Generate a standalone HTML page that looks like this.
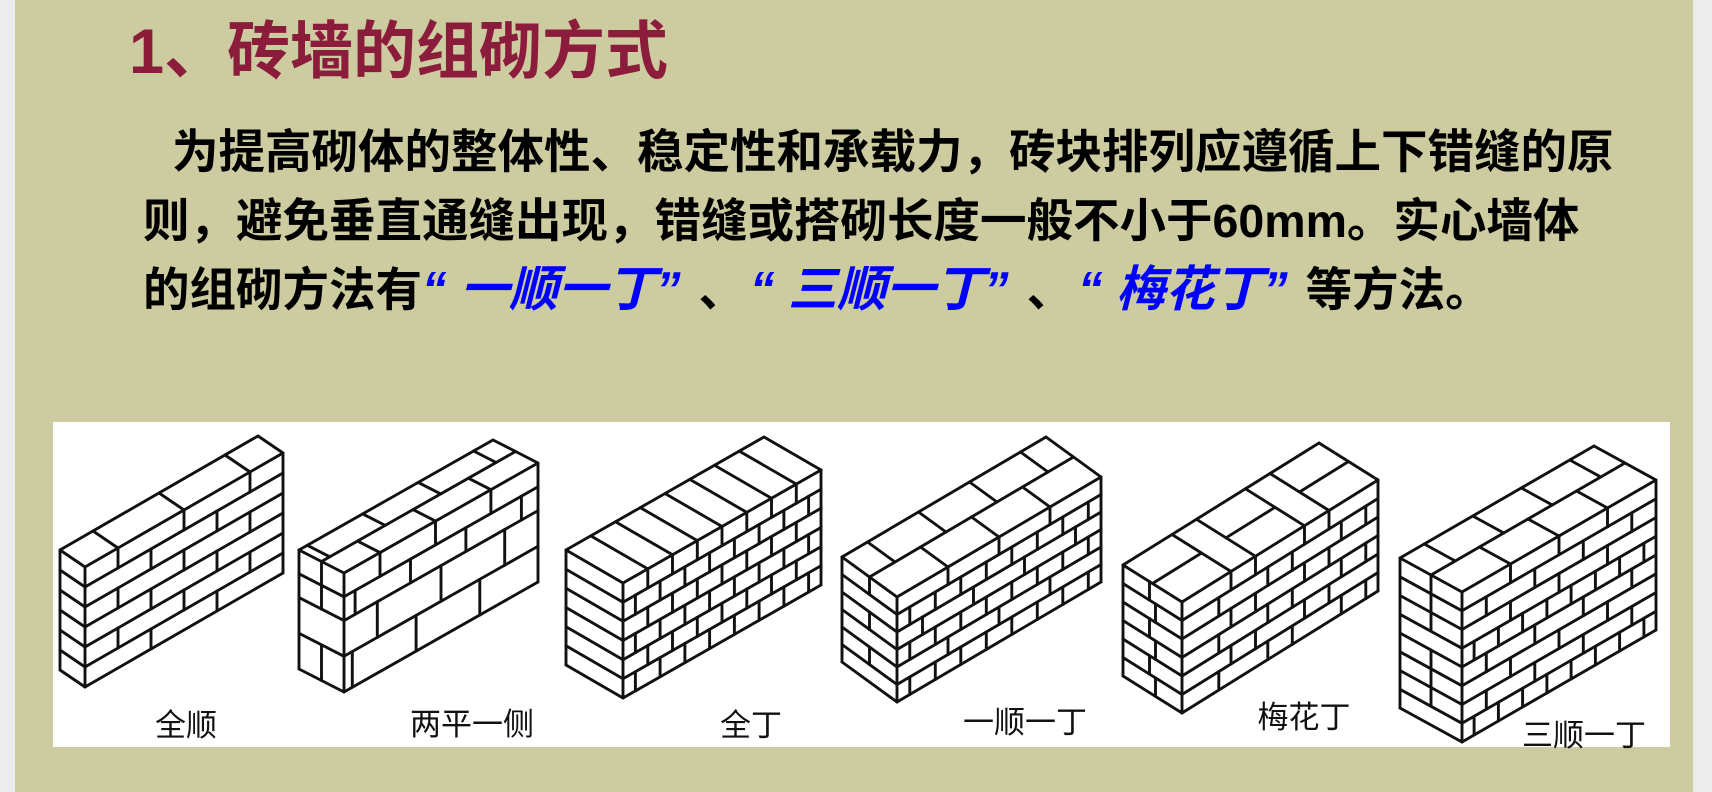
<!DOCTYPE html>
<html><head><meta charset="utf-8">
<style>
html,body{margin:0;padding:0;width:1712px;height:792px;overflow:hidden;background:#ececec;}
#slide{position:absolute;left:15px;top:0;width:1678px;height:792px;background:#cdcca0;}
.t{position:absolute;white-space:nowrap;font-family:"Liberation Sans","Noto Sans CJK SC",sans-serif;}
#title{left:129px;top:18px;font-size:63px;line-height:68px;color:#8c1c3c;font-weight:bold;letter-spacing:0px;}
.body{font-size:46.5px;line-height:69px;font-weight:bold;color:#000;}
.blue{color:#0000ff;font-style:italic;font-size:49px;}
.gap{display:inline-block;width:5px;}
#box{position:absolute;left:53px;top:422px;width:1617px;height:325px;background:#fff;}
.lab{position:absolute;font-family:"Noto Sans CJK SC","WenQuanYi Zen Hei",sans-serif;font-size:31px;line-height:34px;color:#111;white-space:nowrap;transform:translateX(-50%);}
</style></head><body>
<div id="slide"></div>
<div class="t" id="title">1、砖墙的组砌方式</div>
<div class="t body" style="left:172px;top:118px;">为提高砌体的整体性、稳定性和承载力，砖块排列应遵循上下错缝的原</div>
<div class="t body" style="left:143px;top:187px;">则，避免垂直通缝出现，错缝或搭砌长度一般不小于60mm。实心墙体</div>
<div class="t body" style="left:143px;top:256px;">的组砌方法有<span class="blue">“ 一顺一丁”</span><span class="gap"></span> 、<span class="gap"></span><span class="blue">“ 三顺一丁”</span><span class="gap"></span> 、<span class="gap"></span><span class="blue">“ 梅花丁”</span><span class="gap"></span> 等方法。</div>
<div id="box"></div>
<svg id="w" width="1712" height="792" style="position:absolute;left:0;top:0" xmlns="http://www.w3.org/2000/svg"></svg>
<div class="lab" style="left:186px;top:706px;">全顺</div>
<div class="lab" style="left:472px;top:705px;">两平一侧</div>
<div class="lab" style="left:751px;top:706px;">全丁</div>
<div class="lab" style="left:1025px;top:703px;">一顺一丁</div>
<div class="lab" style="left:1304px;top:698px;">梅花丁</div>
<div class="lab" style="left:1584px;top:716px;">三顺一丁</div>
<script>
var out=[];
function ln(p,q){out.push('<line x1="'+p[0].toFixed(1)+'" y1="'+p[1].toFixed(1)+'" x2="'+q[0].toFixed(1)+'" y2="'+q[1].toFixed(1)+'"/>');}
function joints(type,o,U){
  var r=[],p;
  if(type=='S'){for(p=o;p<U-0.05;p+=2)if(p>0.05)r.push(p);}
  else if(type=='H'){for(p=o;p<U-0.05;p+=1)if(p>0.05)r.push(p);}
  else if(type=='R'){for(p=o;p<U-0.05;p+=2.3)if(p>0.05)r.push(p);}
  else if(type=='F'){p=o;var k=0;while(p<U-0.05){if(p>0.05)r.push(p);p+=(k%2==0)?2:1;k++;}}
  return r;
}
function wall(A,B,C,h,U,courses,thin){
  var fx=(C[0]-B[0])/U,fy=(C[1]-B[1])/U,dx=A[0]-B[0],dy=A[1]-B[1];
  function F(t,v){return [B[0]+fx*t,B[1]+fy*t+v*h];}
  function T(t,s){return [B[0]+fx*t+dx*s,B[1]+fy*t+dy*s];}
  function E(s,v){return [B[0]+dx*s,B[1]+dy*s+v*h];}
  ln(A,T(U,1));ln(T(U,1),C);ln(B,C);ln(A,B);ln(B,F(0,1));ln(A,E(1,1));
  ln(E(1,1),F(0,1));ln(F(0,1),F(U,1));ln(C,F(U,1));
  var v=0;
  courses.forEach(function(c,i){
    var v1=v+c.h;
    if(i<courses.length-1){ln(F(0,v1),F(U,v1));ln(E(0,v1),E(1,v1));}
    joints(c.t,c.o,U).forEach(function(p){ln(F(p,v),F(p,v1));});
    if(c.e)ln(E(c.e,v),E(c.e,v1));
    v=v1;
  });
  var top=courses[0];
  var js=joints(top.t,top.o,U);
  if(top.t=='H'||thin){js.forEach(function(p){ln(T(p,0),T(p,1));});}
  else if(top.t=='S'||top.t=='R'){
    ln(T(0,0.5),T(U,0.5));
    js.forEach(function(p){ln(T(p,0),T(p,0.5));});
    joints('S',(top.o+1)%2,U).forEach(function(p){ln(T(p,0.5),T(p,1));});
  } else {
    js.forEach(function(p){ln(T(p,0),T(p,1));});
    var p=top.o,k=0;
    while(p<U){var n=p+((k%2==0)?2:1);if(k%2==0)ln(T(Math.max(p,0),0.5),T(Math.min(n,U),0.5));p=n;k++;}
  }
}
function seq(types,offs,ends){var n=types.length;return types.map(function(t,i){return {t:t,o:offs[i%offs.length],h:1/n,e:ends?ends[i%ends.length]:0};});}
wall([60,550],[85,567],[283,453],120,6,seq(['S','S','S','S','S','S'],[1,0]),true);
wall([299,550],[344,573],[538,463],119,7,[{t:'S',o:1.3,h:0.2,e:0.5},{t:'S',o:0.4,h:0.2,e:0.5},{t:'R',o:1.2,h:0.3,e:0},{t:'R',o:0.3,h:0.3,e:0.5}],false);
wall([566,550],[623,583],[821,470],115,8,seq(['H','H','H','H','H','H'],[1,0.5]),false);
wall([842,557],[897,597],[1101,477],105,8,seq(['S','H','S','H','S','H'],[2,0.5,1,0.5],[0.5,0]),false);
wall([1123,565],[1182,602],[1378,480],111,8,seq(['F','F','F','F','F','F'],[0,1.5],[0.55,0.45]),false);
wall([1400,558],[1462,592],[1656,480],150,8,seq(['S','S','S','H','S','S','S','H'],[2,1,2,0.5,1,2,1,0.5],[0.5,0.5,0.5,0]),false);
document.getElementById('w').innerHTML='<g stroke="#111" stroke-width="2.9" stroke-linecap="round" fill="none">'+out.join('')+'</g>';
</script>
</body></html>
